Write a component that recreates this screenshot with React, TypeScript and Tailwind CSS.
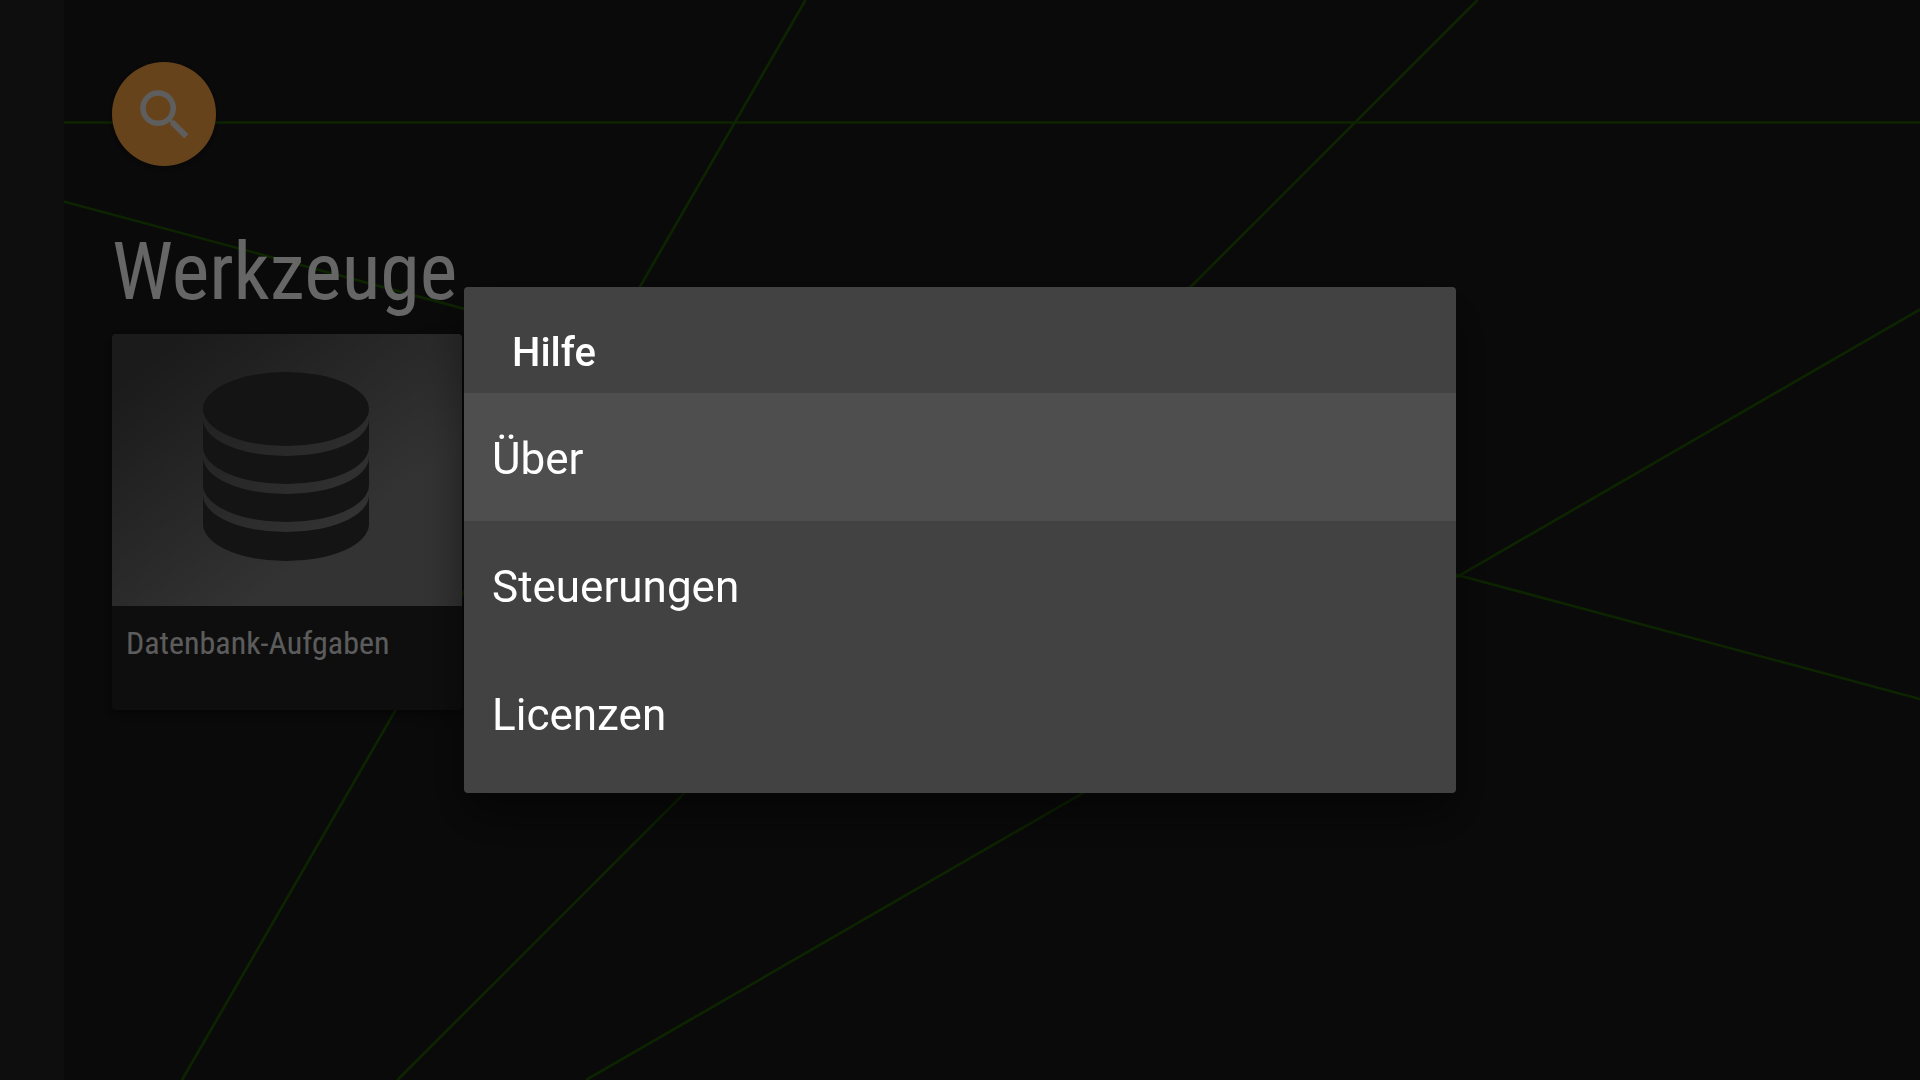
import { useState } from 'react';

interface HelpEntry {
  id: string;
  label: string;
}

const entries: HelpEntry[] = [
  { id: 'about', label: 'Über' },
  { id: 'controls', label: 'Steuerungen' },
  { id: 'licenses', label: 'Licenzen' },
];

const SearchIcon = () => (
  <svg viewBox="0 0 24 24" className="w-[66px] h-[66px] fill-[#ebebeb]" aria-hidden="true">
    <path d="M15.5 14h-.79l-.28-.27A6.471 6.471 0 0 0 16 9.5 6.5 6.5 0 1 0 9.5 16c1.61 0 3.09-.59 4.23-1.57l.27.28v.79l5 4.99L20.49 19l-4.99-5zm-6 0C7.01 14 5 11.99 5 9.5S7.01 5 9.5 5 14 7.01 14 9.5 11.99 14 9.5 14z" />
  </svg>
);

const DatabaseIcon = () => (
  <svg viewBox="0 0 166 189" className="w-[166px] h-[189px] fill-[#323232]" aria-hidden="true">
    <ellipse cx="83" cy="37" rx="83" ry="37" />
    <path d="M0 47a83 37 0 0 0 166 0v28a83 37 0 0 1-166 0z" />
    <path d="M0 85a83 37 0 0 0 166 0v28a83 37 0 0 1-166 0z" />
    <path d="M0 123a83 37 0 0 0 166 0v29a83 37 0 0 1-166 0z" />
  </svg>
);

const Backdrop = () => (
  <svg
    viewBox="0 0 1920 1080"
    preserveAspectRatio="xMidYMid slice"
    className="absolute inset-0 w-full h-full stroke-[#205a00]"
    strokeWidth="2.6"
    aria-hidden="true"
  >
    <line x1="0" y1="122.5" x2="1920" y2="122.5" />
    <line x1="0" y1="184.4" x2="1920" y2="699" />
    <line x1="586" y1="1080" x2="1920" y2="309.5" />
    <line x1="182" y1="1080" x2="805.5" y2="0" />
    <line x1="397.5" y1="1080" x2="1477.5" y2="0" />
  </svg>
);

const App = () => {
  const [selected, setSelected] = useState('about');

  return (
    <div className="relative flex min-h-screen overflow-hidden bg-[#1a1a1a] font-['Roboto',sans-serif]">
      <Backdrop />

      {/* Collapsed navigation */}
      <aside className="relative w-16 shrink-0 bg-[#242424]" />

      {/* Tools */}
      <main className="relative flex-1 px-12 pt-[62px] font-['Roboto_Condensed','Liberation_Sans_Narrow','Roboto',sans-serif]">
        <button
          aria-label="Suche"
          className="flex items-center justify-center w-26 h-26 pt-0.5 pl-0.5 rounded-full bg-[#ffa841] shadow-[0_2px_6px_rgba(0,0,0,0.4)]"
        >
          <SearchIcon />
        </button>
        <h1 className="mt-[58px] mb-3.5 text-[80px] leading-24 text-white">Werkzeuge</h1>
        <button className="block w-[350px] overflow-hidden rounded bg-[#242424] text-left shadow-[0_4px_12px_rgba(0,0,0,0.5)]">
          <span className="flex items-center justify-center h-[272px] pr-0.5 pb-2 bg-linear-to-br from-[#444444] from-10% to-[#808080] to-70%">
            <DatabaseIcon />
          </span>
          <span className="block h-26 px-3.5 pt-[15px] text-[32px] leading-11 text-[#e6e6e6]">
            Datenbank-Aufgaben
          </span>
        </button>
      </main>

      {/* Help dialog */}
      <div className="fixed inset-0 flex items-center justify-center bg-black/60">
        <div
          role="dialog"
          aria-labelledby="help-title"
          className="w-[992px] max-w-full overflow-hidden rounded pb-4 bg-[#424242] text-white shadow-[0_24px_48px_rgba(0,0,0,0.5)]"
        >
          <h2 id="help-title" className="px-12 pt-[41px] pb-[15px] text-[40px] leading-[50px] font-medium">
            Hilfe
          </h2>
          <ul>
            {entries.map(entry => (
              <li key={entry.id}>
                <button
                  onClick={() => setSelected(entry.id)}
                  className={`w-full h-32 px-7 pt-1 text-left text-[44px] ${
                    selected === entry.id ? 'bg-[#4e4e4e]' : ''
                  }`}
                >
                  {entry.label}
                </button>
              </li>
            ))}
          </ul>
        </div>
      </div>
    </div>
  );
};

export default App;
